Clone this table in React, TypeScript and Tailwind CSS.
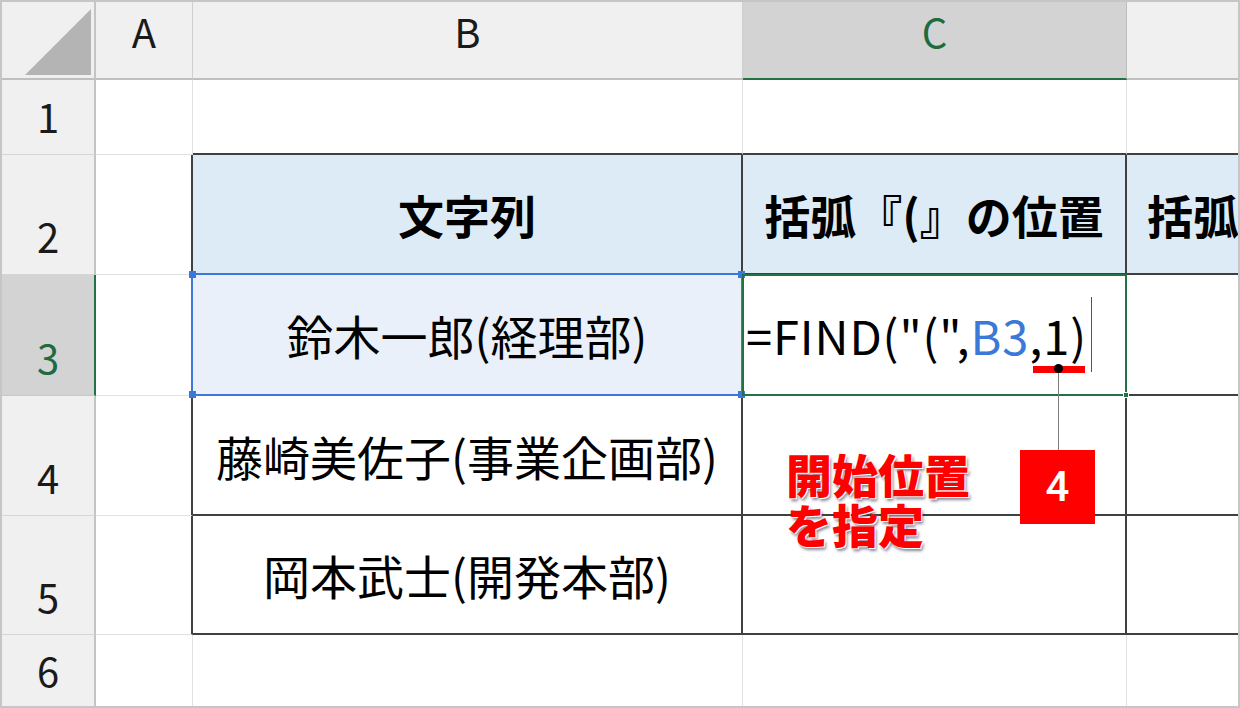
import React from "react";

// Excel-like sheet: FIND formula being edited in C3, with a callout.

const DARK = "border-[#404040]";

function RowHead({ n, active, last }: { n: number; active?: boolean; last?: boolean }) {
  if (active) {
    return (
      <div className="flex items-end justify-center border-r-2 border-b border-r-[#217346] border-b-[#c8c8c8] bg-[#d3d3d3] pb-[18px] text-[40px] leading-none text-[#1e6b40]">
        {n}
      </div>
    );
  }
  return (
    <div
      className={
        last
          ? "flex items-end justify-center border-r-2 border-r-[#c4c4c4] bg-[#f0f0f0] pb-[16px] text-[40px] leading-none text-[#1a1a1a]"
          : "flex items-end justify-center border-r-2 border-b border-r-[#c4c4c4] border-b-[#d6d6d6] bg-[#f0f0f0] pb-[18px] text-[40px] leading-none text-[#1a1a1a]"
      }
    >
      {n}
    </div>
  );
}

function ColHead({ label }: { label: string }) {
  return (
    <div className="flex items-start justify-center border-r border-b-2 border-r-[#cfcfcf] border-b-[#bfbfbf] bg-[#f0f0f0] text-[40px] leading-[58px] text-[#1a1a1a]">
      {label}
    </div>
  );
}

function TableRow({ n, name }: { n: number; name: string }) {
  return (
    <>
      <RowHead n={n} />
      <div className="border-r-2 border-b border-r-[#404040] border-b-[#e2e2e2]" />
      <div className={`flex items-center justify-center whitespace-nowrap border-r-2 border-b-2 ${DARK} text-[47px] leading-none text-black`}>
        {name}
      </div>
      <div className={`border-r-2 border-b-2 ${DARK}`} />
      <div className={`border-b-2 ${DARK}`} />
    </>
  );
}

export default function App() {
  return (
    <div className="relative h-[708px] w-[1240px] overflow-hidden border-2 border-[#c6c6c6] bg-white font-['Noto_Sans_CJK_JP','Noto_Sans',sans-serif]">
      <div className="grid h-full w-full grid-cols-[94px_97px_550px_384px_111px] grid-rows-[78px_75px_120px_121px_120px_119px_71px]">
        {/* header row */}
        <div className="border-r-2 border-b-2 border-r-[#c4c4c4] border-b-[#bfbfbf] bg-[#f0f0f0]">
          <svg width="92" height="76" viewBox="0 0 92 76" className="block">
            <polygon points="23,73 89,73 89,7" fill="#b4b4b4" />
          </svg>
        </div>
        <ColHead label="A" />
        <ColHead label="B" />
        <div className="flex items-start justify-center border-r border-b-2 border-r-[#bdbdbd] border-b-[#217346] bg-[#d3d3d3] text-[40px] leading-[58px] text-[#1e6b40]">
          C
        </div>
        <div className="border-b-2 border-b-[#bfbfbf] bg-[#f0f0f0]" />

        {/* row 1 */}
        <RowHead n={1} />
        <div className="border-r border-b border-[#e2e2e2]" />
        <div className="border-r border-b-2 border-r-[#e2e2e2] border-b-[#404040]" />
        <div className="border-r border-b-2 border-r-[#e2e2e2] border-b-[#404040]" />
        <div className="border-b-2 border-b-[#404040]" />

        {/* row 2: table header */}
        <RowHead n={2} />
        <div className="border-r-2 border-b border-r-[#404040] border-b-[#e2e2e2]" />
        <div className={`flex items-center justify-center border-r-2 border-b-2 ${DARK} bg-[#ddebf7] text-[46px] font-bold leading-none text-black`}>
          文字列
        </div>
        <div className={`flex items-center justify-center whitespace-nowrap border-r-2 border-b-2 ${DARK} bg-[#ddebf7] text-[46px] font-bold leading-none text-black`}>
          括弧『(』の位置
        </div>
        <div className={`flex items-center overflow-hidden whitespace-nowrap border-b-2 ${DARK} bg-[#ddebf7] pl-[20px] text-[46px] font-bold leading-none text-black`}>
          括弧『)』の位置
        </div>

        {/* row 3: active row */}
        <RowHead n={3} active />
        <div className="border-r-2 border-b border-r-[#404040] border-b-[#e2e2e2]" />
        <div className={`relative flex items-center justify-center whitespace-nowrap border-r-2 border-b-2 ${DARK} bg-[#eaf0f9] text-[47px] leading-none text-black`}>
          鈴木一郎(経理部)
          <div className="absolute -top-[2px] -bottom-[2px] -left-[2px] right-[-2px] z-10 border-2 border-[#3b78d8]">
            <span className="absolute -top-[4px] -left-[4px] h-[7px] w-[7px] bg-[#3b78d8]" />
            <span className="absolute -bottom-[4px] -left-[4px] h-[7px] w-[7px] bg-[#3b78d8]" />
            <span className="absolute -top-[4px] -right-[4px] h-[7px] w-[7px] bg-[#3b78d8]" />
            <span className="absolute -bottom-[4px] -right-[4px] h-[7px] w-[7px] bg-[#3b78d8]" />
          </div>
        </div>
        <div className={`relative flex items-center whitespace-nowrap border-r-2 border-b-2 ${DARK} pl-[3px] text-[47px] leading-none tracking-[0.9px] text-black`}>
          <span>
            {'=FIND("(",'}
            <span className="text-[#3c78d8]">B3</span>
            {",1)"}
          </span>
          <span className="ml-[4px] inline-block h-[75px] w-px bg-[#555]" />
          <div className="absolute -top-[1px] -bottom-[2px] -left-[1px] right-[-2px] z-20 border-2 border-[#217346]">
            <span className="absolute -right-[4px] -bottom-[4px] h-[6px] w-[6px] border border-white bg-[#217346]" />
          </div>
        </div>
        <div className={`border-b-2 ${DARK}`} />

        <TableRow n={4} name="藤崎美佐子(事業企画部)" />
        <TableRow n={5} name="岡本武士(開発本部)" />

        {/* row 6 */}
        <RowHead n={6} last />
        <div className="border-r border-[#e2e2e2]" />
        <div className="border-r border-[#e2e2e2]" />
        <div className="border-r border-[#e2e2e2]" />
        <div />
      </div>

      {/* callout */}
      <div className="absolute top-[364px] left-[1031px] z-30 h-[7px] w-[52px] bg-[#ff0000]" />
      <div className="absolute top-[366px] left-[1056px] z-30 h-[82px] w-px bg-[#808080]" />
      <div className="absolute top-[362px] left-[1052px] z-30 h-[9px] w-[9px] rounded-full bg-black" />
      <div className="absolute top-[448px] left-[1018px] z-30 flex h-[74px] w-[75px] items-center justify-center bg-[#ff0000] font-['Roboto',sans-serif] text-[42px] font-medium leading-none text-white">
        4
      </div>
      <div className="absolute top-[448px] left-[784px] z-30 flex flex-col gap-[4px] text-[46px] leading-[46px] font-black text-[#ff0000] [text-shadow:1px_1px_0_#fff,2px_3px_3px_rgba(60,60,90,0.6)]">
        <span>開始位置</span>
        <span>を指定</span>
      </div>
    </div>
  );
}
